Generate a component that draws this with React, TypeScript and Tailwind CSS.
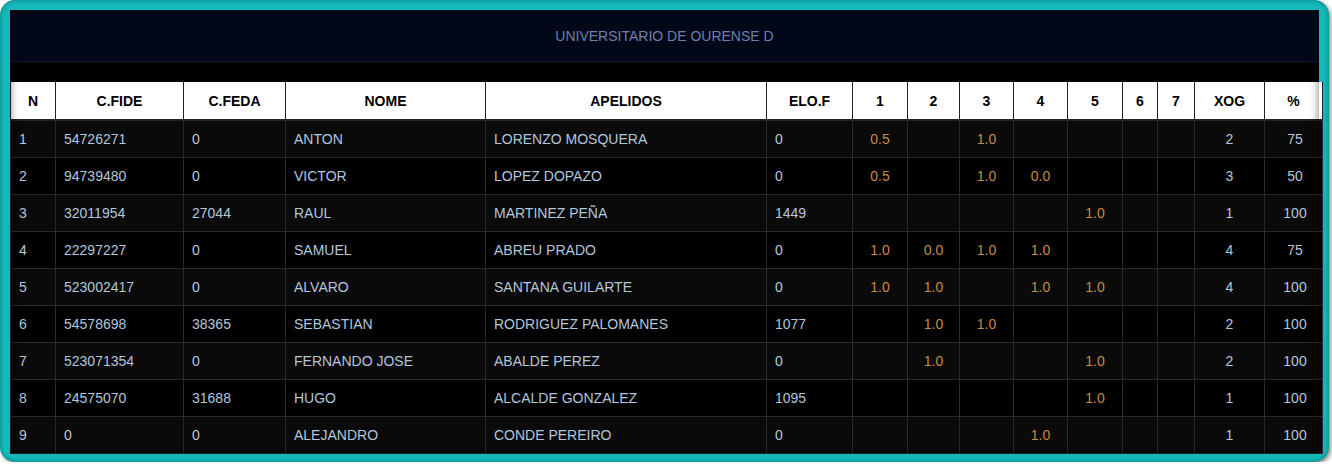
import React from "react";

type Row = {
  n: number;
  fide: string;
  feda: string;
  nome: string;
  apelidos: string;
  elo: string;
  r: string[];
  xog: number;
  pct: number;
};

const rows: Row[] = [
  { n: 1, fide: "54726271", feda: "0", nome: "ANTON", apelidos: "LORENZO MOSQUERA", elo: "0", r: ["0.5", "", "1.0", "", "", "", ""], xog: 2, pct: 75 },
  { n: 2, fide: "94739480", feda: "0", nome: "VICTOR", apelidos: "LOPEZ DOPAZO", elo: "0", r: ["0.5", "", "1.0", "0.0", "", "", ""], xog: 3, pct: 50 },
  { n: 3, fide: "32011954", feda: "27044", nome: "RAUL", apelidos: "MARTINEZ PEÑA", elo: "1449", r: ["", "", "", "", "1.0", "", ""], xog: 1, pct: 100 },
  { n: 4, fide: "22297227", feda: "0", nome: "SAMUEL", apelidos: "ABREU PRADO", elo: "0", r: ["1.0", "0.0", "1.0", "1.0", "", "", ""], xog: 4, pct: 75 },
  { n: 5, fide: "523002417", feda: "0", nome: "ALVARO", apelidos: "SANTANA GUILARTE", elo: "0", r: ["1.0", "1.0", "", "1.0", "1.0", "", ""], xog: 4, pct: 100 },
  { n: 6, fide: "54578698", feda: "38365", nome: "SEBASTIAN", apelidos: "RODRIGUEZ PALOMANES", elo: "1077", r: ["", "1.0", "1.0", "", "", "", ""], xog: 2, pct: 100 },
  { n: 7, fide: "523071354", feda: "0", nome: "FERNANDO JOSE", apelidos: "ABALDE PEREZ", elo: "0", r: ["", "1.0", "", "", "1.0", "", ""], xog: 2, pct: 100 },
  { n: 8, fide: "24575070", feda: "31688", nome: "HUGO", apelidos: "ALCALDE GONZALEZ", elo: "1095", r: ["", "", "", "", "1.0", "", ""], xog: 1, pct: 100 },
  { n: 9, fide: "0", feda: "0", nome: "ALEJANDRO", apelidos: "CONDE PEREIRO", elo: "0", r: ["", "", "", "1.0", "", "", ""], xog: 1, pct: 100 },
];

const widths = [45, 128, 102, 200, 281, 86, 55, 52, 54, 54, 55, 35, 37, 70, 58];
const heads = ["N", "C.FIDE", "C.FEDA", "NOME", "APELIDOS", "ELO.F", "1", "2", "3", "4", "5", "6", "7", "XOG", "%"];

export default function App() {
  return (
    <div className="w-[1329px] bg-white" style={{ fontFamily: '"Liberation Sans", Arial, sans-serif' }}>
      {/* teal frame */}
      <div className="rounded-[15px] bg-[#14b9b9] px-[10px] pt-[10px] pb-[8px] shadow-[inset_0_0_5px_rgba(0,0,0,0.35),2px_2px_4px_rgba(0,0,0,0.45)]">
        <div className="relative bg-black">
          <div className="h-[52px] pt-[2px] flex items-center justify-center bg-[#02081a] border-b border-[#141a2c] text-[14px] text-[#6d80ab]">
            UNIVERSITARIO DE OURENSE D
          </div>
          <div className="h-[20px] bg-black" />
          <table className="w-full table-fixed border-collapse text-[14px]">
            <colgroup>
              {widths.map((w, i) => (
                <col key={i} style={{ width: w }} />
              ))}
            </colgroup>
            <thead>
              <tr className="h-[38px] bg-white border-b-2 border-[#222]">
                {heads.map((h) => (
                  <th key={h} className="border-x border-[#222] pt-[2px] font-bold text-black text-center">
                    {h}
                  </th>
                ))}
              </tr>
            </thead>
            <tbody className="text-[#b2c6dc]">
              {rows.map((r, i) => (
                <tr key={r.n} className={`h-[37px] ${i % 2 === 0 ? "bg-[#0a0a0a]" : "bg-black"}`}>
                  <td className="border border-[#2a2a2a] pl-2 pt-[2px]">{r.n}</td>
                  <td className="border border-[#2a2a2a] pl-2 pt-[2px]">{r.fide}</td>
                  <td className="border border-[#2a2a2a] pl-2 pt-[2px]">{r.feda}</td>
                  <td className="border border-[#2a2a2a] pl-2 pt-[2px]">{r.nome}</td>
                  <td className="border border-[#2a2a2a] pl-2 pt-[2px]">{r.apelidos}</td>
                  <td className="border border-[#2a2a2a] pl-2 pt-[2px]">{r.elo}</td>
                  {r.r.map((s, j) => (
                    <td key={j} className="border border-[#2a2a2a] pt-[2px] text-center text-[#c58a45]">
                      {s}
                    </td>
                  ))}
                  <td className="border border-[#2a2a2a] pt-[2px] text-center">{r.xog}</td>
                  <td className="border border-[#2a2a2a] pt-[2px] pl-[3px] text-center">{r.pct}</td>
                </tr>
              ))}
            </tbody>
          </table>
          {/* inner shadow over the panel edge */}
          <div className="pointer-events-none absolute inset-0 shadow-[inset_0_0_8px_rgba(0,0,0,0.55)]" />
        </div>
      </div>
    </div>
  );
}
